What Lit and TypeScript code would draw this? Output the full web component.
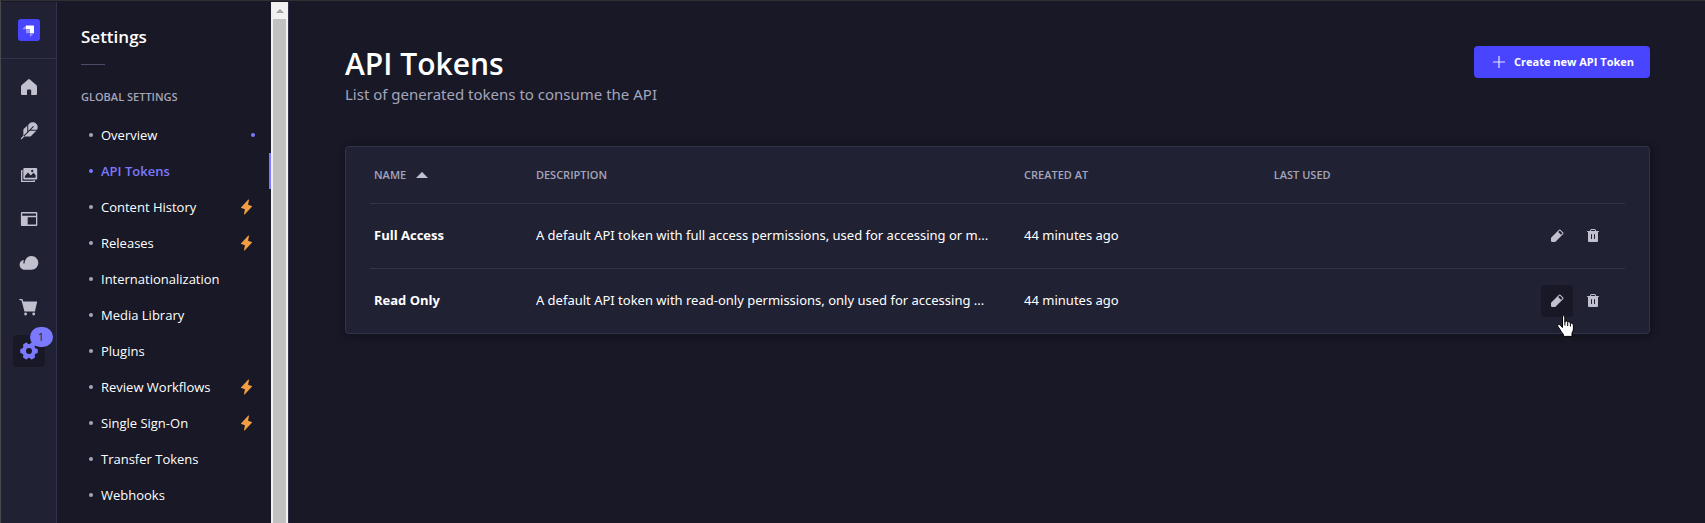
import { LitElement, html, svg, css, nothing } from "lit";
import { customElement, property } from "lit/decorators.js";
import { classMap } from "lit/directives/class-map.js";

const bolt = svg`<path fill="currentColor" d="M213.85,125.46l-112,120a8,8,0,0,1-13.69-7l14.66-73.33L45.19,143.49a8,8,0,0,1-3-13l112-120a8,8,0,0,1,13.69,7L153.18,90.9l57.63,21.61a8,8,0,0,1,3,12.95Z"/>`;
const pencil = svg`<path fill="currentColor" d="M227.31,73.37,182.63,28.68a16,16,0,0,0-22.63,0L36.69,152A15.86,15.86,0,0,0,32,163.31V208a16,16,0,0,0,16,16H92.69A15.86,15.86,0,0,0,104,219.31L227.31,96a16,16,0,0,0,0-22.63ZM192,108.68,147.31,64l24-24L216,84.68Z"/>`;
const trash = svg`<path fill="currentColor" d="M216,48H176V40a24,24,0,0,0-24-24H104A24,24,0,0,0,80,40v8H40a8,8,0,0,0,0,16h8V208a16,16,0,0,0,16,16H192a16,16,0,0,0,16-16V64h8a8,8,0,0,0,0-16ZM112,168a8,8,0,0,1-16,0V104a8,8,0,0,1,16,0Zm48,0a8,8,0,0,1-16,0V104a8,8,0,0,1,16,0Zm0-120H96V40a8,8,0,0,1,8-8h48a8,8,0,0,1,8,8Z"/>`;

/* Main navigation glyphs, drawn on a 20 x 20 grid. */
const glyphs = {
  home: svg`<path fill="currentColor" d="M9.1 2.4Q10 1.6 10.9 2.4L17.3 8.1Q18 8.8 18 9.7V16.8Q18 18 16.8 18H12.2V13.6Q12.2 12.6 11.2 12.6H9Q8 12.6 8 13.6V18H3.2Q2 18 2 16.8V9.7Q2 8.8 2.7 8.1Z"/>`,
  feather: svg`<g transform="scale(.078)"><path fill="currentColor" d="M221.28,34.75a64,64,0,0,0-90.49,0L60.69,104A15.9,15.9,0,0,0,56,115.31v73.38L26.34,218.34a8,8,0,0,0,11.32,11.32L67.32,200H140.7A15.92,15.92,0,0,0,152,195.32l69.28-70A64,64,0,0,0,221.28,34.75Z"/><path fill="none" stroke="#212134" stroke-width="13" d="M64 192 186 70M112 30V144M138 118H245"/></g>`,
  media: svg`<path fill="none" stroke="currentColor" stroke-width="1.4" d="M3.7 6H2.7V16.4H15.2V15.2"/><path fill="currentColor" fill-rule="evenodd" d="M5.3 3H17.2Q18.2 3 18.2 4V13.4Q18.2 14.4 17.2 14.4H5.3Q4.3 14.4 4.3 13.4V4Q4.3 3 5.3 3ZM5.9 11V12.8H16.6V9.9L14.4 7.8L11.8 10.4L9 7.6ZM13.2 4.8A1.2 1.2 0 1 0 13.3 4.8Z"/>`,
  layout: svg`<path fill="currentColor" fill-rule="evenodd" d="M2.8 3H17.4Q18.3 3 18.3 3.9V16.1Q18.3 17 17.4 17H2.8Q1.9 17 1.9 16.1V3.9Q1.9 3 2.8 3ZM3.2 4.6V6.8H17V4.6ZM8.7 8.2V15.6H17V8.2Z"/>`,
  cloud: svg`<g transform="scale(.078)"><path fill="currentColor" d="M160.06,40A88.1,88.1,0,0,0,81.29,88.68h0A87.48,87.48,0,0,0,72,127.73,8.18,8.18,0,0,1,64.57,136,8,8,0,0,1,56,128a103.66,103.66,0,0,1,5.34-32.92,4,4,0,0,0-4.75-5.18A64.09,64.09,0,0,0,8,152c0,35.19,29.75,64,65,64H160a88.09,88.09,0,0,0,87.93-91.48C246.11,77.54,207.07,40,160.06,40Z"/></g>`,
  cart: svg`<path fill="none" stroke="currentColor" stroke-width="1.4" stroke-linecap="round" stroke-linejoin="round" d="M.9 2.6H3L6 13.8H15.6"/><path fill="currentColor" d="M3.6 4.6H17.6Q18.3 4.6 18.1 5.3L16.2 12.9Q15.9 14 15 14H6.2Z"/><circle cx="6.6" cy="17" r="1.4" fill="currentColor"/><circle cx="14.7" cy="17" r="1.4" fill="currentColor"/>`,
  gear: svg`<circle cx="10" cy="10" r="5" fill="none" stroke="currentColor" stroke-width="4"/>${[0, 60, 120, 180, 240, 300].map(
    (a) => svg`<rect x="14.4" y="7.4" width="4.4" height="5.2" rx="1.6" fill="currentColor" transform="rotate(${a} 10 10)"/>`
  )}`,
};

type Glyph = keyof typeof glyphs;

const mainLinks: { icon: Glyph; label: string; badge?: string }[] = [
  { icon: "home", label: "Home" },
  { icon: "feather", label: "Content Manager" },
  { icon: "media", label: "Media Library" },
  { icon: "layout", label: "Content-Type Builder" },
  { icon: "cloud", label: "Deploy" },
  { icon: "cart", label: "Marketplace" },
  { icon: "gear", label: "Settings", badge: "1" },
];

const settingsLinks: { label: string; active?: boolean; mark?: "dot" | "bolt" }[] = [
  { label: "Overview", mark: "dot" },
  { label: "API Tokens", active: true },
  { label: "Content History", mark: "bolt" },
  { label: "Releases", mark: "bolt" },
  { label: "Internationalization" },
  { label: "Media Library" },
  { label: "Plugins" },
  { label: "Review Workflows", mark: "bolt" },
  { label: "Single Sign-On", mark: "bolt" },
  { label: "Transfer Tokens" },
  { label: "Webhooks" },
];

const tokens = [
  {
    name: "Full Access",
    description: "A default API token with full access permissions, used for accessing or m...",
    created: "44 minutes ago",
  },
  {
    name: "Read Only",
    description: "A default API token with read-only permissions, only used for accessing ...",
    created: "44 minutes ago",
    hovered: true,
  },
];

const shared = css`
  * {
    box-sizing: border-box;
  }
  svg {
    display: block;
    flex: none;
  }
  a {
    color: inherit;
    text-decoration: none;
  }
  button {
    border: 0;
    margin: 0;
    padding: 0;
    background: none;
    color: inherit;
    font: inherit;
    cursor: pointer;
  }
  ul {
    list-style: none;
    margin: 0;
    padding: 0;
  }
`;

@customElement("main-nav")
export class MainNav extends LitElement {
  static styles = [
    shared,
    css`
      :host {
        display: block;
        flex: none;
        width: 56px;
        background: #212134;
        border-right: 1px solid #32324d;
      }
      .brand {
        display: flex;
        justify-content: center;
        padding: 17px 0;
        border-bottom: 1px solid #32324d;
      }
      .links {
        display: flex;
        flex-direction: column;
        align-items: center;
        gap: 12px;
        padding-top: 12px;
      }
      .link {
        position: relative;
        display: flex;
        align-items: center;
        justify-content: center;
        width: 32px;
        height: 32px;
        border-radius: 4px;
        color: #c0c0cf;
      }
      .current {
        background: #181826;
        color: #7b79ff;
      }
      .badge {
        position: absolute;
        top: -8px;
        right: -8px;
        min-width: 23px;
        height: 20px;
        border-radius: 10px;
        background: #7b79ff;
        color: #212134;
        font-size: 11px;
        line-height: 20px;
        text-align: center;
      }
    `,
  ];

  render() {
    return html`
      <nav aria-label="Main">
        <div class="brand">
          <svg width="22" height="22" viewBox="0 0 22 22" role="img" aria-label="Strapi">
            <rect width="22" height="22" rx="3" fill="#4945ff" />
            <path fill="#fff" d="M8 6.4H15.6Q16 6.4 16 6.8V14.2H12V10.3H8Z" />
            <path fill="#9593ff" d="M8 6.4V10.3H4.4Q4 10.2 4.3 9.9ZM12 14.2H16L12.4 17.8Q12 18 12 17.6ZM8 10.3H12V14.2H8.4Q8 14.2 8 13.8Z" />
          </svg>
        </div>
        <ul class="links">
          ${mainLinks.map(
            (l) => html`<li>
              <a href="#" class=${classMap({ link: true, current: !!l.badge })} aria-label=${l.label}>
                <svg width="20" height="20" viewBox="0 0 20 20">${glyphs[l.icon]}</svg>
                ${l.badge ? html`<span class="badge">${l.badge}</span>` : nothing}
              </a>
            </li>`
          )}
        </ul>
      </nav>
    `;
  }
}

@customElement("settings-nav")
export class SettingsNav extends LitElement {
  static styles = [
    shared,
    css`
      :host {
        display: flex;
        flex: none;
        width: 232px;
        border-right: 1px solid #32324d;
      }
      .menu {
        flex: 1;
        min-width: 0;
      }
      .title {
        margin: 0;
        padding: 23px 24px 0;
        color: #fff;
        font-size: 17px;
        font-weight: 600;
        line-height: 24px;
      }
      .rule {
        width: 24px;
        height: 1px;
        margin: 15px 24px 24px;
        background: #4a4a6a;
      }
      .group {
        margin: 0;
        padding: 0 24px 12px;
        color: #a5a5ba;
        font-size: 11px;
        font-weight: 600;
        line-height: 16px;
      }
      .item {
        display: flex;
        align-items: center;
        gap: 8px;
        height: 36px;
        padding: 0 16px 0 32px;
        color: #fff;
        font-size: 13px;
        line-height: 20px;
      }
      .item::before {
        content: "";
        width: 4px;
        height: 4px;
        border-radius: 50%;
        background: #a5a5ba;
      }
      .label {
        flex: 1;
      }
      .active {
        border-right: 2px solid #7b79ff;
        color: #7b79ff;
        font-weight: 600;
      }
      .active::before {
        background: #7b79ff;
      }
      .dot {
        width: 4px;
        height: 4px;
        border-radius: 50%;
        background: #7b79ff;
      }
      .bolt {
        color: #f29d41;
      }
      .track {
        display: flex;
        flex: none;
        flex-direction: column;
        align-items: center;
        gap: 6px;
        width: 17px;
        padding-top: 7px;
        background: #f1f1f1;
      }
      .arrow {
        border: 4px solid transparent;
        border-top: 0;
        border-bottom-color: #a3a3a3;
      }
      .thumb {
        flex: 1;
        width: 13px;
        background: #c1c1c1;
      }
    `,
  ];

  render() {
    return html`
      <nav class="menu" aria-label="Settings">
        <h2 class="title">Settings</h2>
        <div class="rule"></div>
        <h3 class="group">GLOBAL SETTINGS</h3>
        <ul>
          ${settingsLinks.map(
            (l) => html`<li>
              <a href="#" class=${classMap({ item: true, active: !!l.active })}>
                <span class="label">${l.label}</span>
                ${l.mark === "dot" ? html`<span class="dot"></span>` : nothing}
                ${l.mark === "bolt" ? html`<svg class="bolt" width="16" height="16" viewBox="8 0 256 256">${bolt}</svg>` : nothing}
              </a>
            </li>`
          )}
        </ul>
      </nav>
      <div class="track" aria-hidden="true">
        <span class="arrow"></span>
        <span class="thumb"></span>
      </div>
    `;
  }
}

@customElement("token-table")
export class TokenTable extends LitElement {
  @property({ attribute: false }) rows: typeof tokens = [];

  static styles = [
    shared,
    css`
      :host {
        display: block;
        padding: 0 24px;
        background: #212134;
        border: 1px solid #32324d;
        border-radius: 4px;
        box-shadow: 1px 1px 10px rgba(3, 3, 5, 0.35);
      }
      .table {
        width: 100%;
        border-collapse: separate;
        border-spacing: 0;
        table-layout: fixed;
        color: #fff;
        font-size: 13px;
        line-height: 20px;
      }
      .c-name {
        width: 12.9%;
      }
      .c-desc {
        width: 38.9%;
      }
      .c-created {
        width: 19.9%;
      }
      .c-actions {
        width: 88px;
      }
      th,
      td {
        padding: 0 4px;
        text-align: left;
        vertical-align: middle;
        border-bottom: 1px solid #32324d;
      }
      th {
        height: 57px;
        color: #a5a5ba;
        font-size: 11px;
        font-weight: 600;
      }
      td {
        height: 65px;
        padding-bottom: 2px;
      }
      .text {
        font-family: "Noto Sans", "Open Sans", sans-serif;
      }
      .tools {
        padding-bottom: 0;
      }
      tr:last-child td {
        height: 64px;
        border-bottom: 0;
      }
      .sort {
        display: flex;
        align-items: center;
        gap: 10px;
      }
      .name {
        font-weight: 700;
      }
      .actions {
        display: flex;
        gap: 4px;
      }
      .action {
        position: relative;
        display: flex;
        align-items: center;
        justify-content: center;
        width: 32px;
        height: 32px;
        border-radius: 4px;
        color: #c0c0cf;
      }
      .hovered {
        background: #181826;
      }
      .pointer {
        position: absolute;
        top: 30px;
        left: 16px;
      }
    `,
  ];

  render() {
    return html`
      <table class="table">
        <colgroup>
          <col class="c-name" />
          <col class="c-desc" />
          <col class="c-created" />
          <col />
          <col class="c-actions" />
        </colgroup>
        <thead>
          <tr>
            <th scope="col" aria-sort="ascending">
              <button class="sort">
                NAME
                <svg width="12" height="6" viewBox="0 0 12 6"><path fill="#c0c0cf" d="M0 6 5.4.4Q6-.2 6.6.4L12 6Z" /></svg>
              </button>
            </th>
            <th scope="col">DESCRIPTION</th>
            <th scope="col">CREATED AT</th>
            <th scope="col">LAST USED</th>
            <th></th>
          </tr>
        </thead>
        <tbody>
          ${this.rows.map(
            (r) => html`<tr>
              <td class="name">${r.name}</td>
              <td class="text">${r.description}</td>
              <td class="text">${r.created}</td>
              <td></td>
              <td class="tools">
                <div class="actions">
                  <button class=${classMap({ action: true, hovered: !!r.hovered })} aria-label="Edit ${r.name}">
                    <svg width="16" height="16" viewBox="0 0 256 256">${pencil}</svg>
                    ${r.hovered
                      ? html`<svg class="pointer" width="17" height="22" viewBox="0 0 17 22">
                          <path
                            fill="#fff"
                            stroke="#000"
                            stroke-linejoin="round"
                            d="M5.5 12.5V2Q5.5.6 6.6.6T7.8 2V7.2Q8.2 5.8 9.4 6T10.6 7.6Q11.4 6.4 12.4 6.9T13.2 8.6Q14.3 7.6 15.3 8.4T16.4 10.5V14Q16.4 16 15 18V21.4H6.4V19.4Q4.2 17 2.8 14.2L.8 11.3Q.3 10 1.4 9.6T3.6 10.6Z"
                          />
                          <path stroke="#000" d="M7.9 7V10.5M10.7 8V11M13.4 9V11.5" />
                        </svg>`
                      : nothing}
                  </button>
                  <button class="action" aria-label="Delete ${r.name}">
                    <svg width="16" height="16" viewBox="0 0 256 256">${trash}</svg>
                  </button>
                </div>
              </td>
            </tr>`
          )}
        </tbody>
      </table>
    `;
  }
}

@customElement("app-root")
export class AppRoot extends LitElement {
  static styles = [
    shared,
    css`
      :host {
        display: flex;
        box-sizing: border-box;
        min-height: 100vh;
        padding-top: 1px;
        border-top: 1px solid #303034;
        border-left: 1px solid #47474c;
        background: #181826;
        font-family: "Open Sans", "Noto Sans", sans-serif;
      }
      .content {
        flex: 1;
        min-width: 0;
        padding: 44px 55px 40px 56px;
      }
      .header {
        display: flex;
        align-items: flex-start;
        justify-content: space-between;
        padding-bottom: 40px;
      }
      .title {
        margin: 0;
        color: #fff;
        font-size: 30px;
        font-weight: 600;
        line-height: 36px;
      }
      .subtitle {
        margin: 0;
        color: #a5a5ba;
        font-family: "Noto Sans", "Open Sans", sans-serif;
        font-size: 15px;
        line-height: 24px;
      }
      .create {
        display: flex;
        align-items: center;
        gap: 9px;
        height: 32px;
        padding: 0 16px 0 19px;
        border-radius: 4px;
        background: #4945ff;
        color: #fff;
        font-size: 11px;
        font-weight: 700;
        line-height: 14px;
      }
    `,
  ];

  render() {
    return html`
      <main-nav></main-nav>
      <settings-nav></settings-nav>
      <main class="content">
        <header class="header">
          <div>
            <h1 class="title">API Tokens</h1>
            <p class="subtitle">List of generated tokens to consume the API</p>
          </div>
          <button class="create">
            <svg width="12" height="12" viewBox="0 0 12 12"><path stroke="#e6e6ff" stroke-width="1.2" d="M6 0V12M0 6H12" /></svg>
            Create new API Token
          </button>
        </header>
        <token-table .rows=${tokens}></token-table>
      </main>
    `;
  }
}
